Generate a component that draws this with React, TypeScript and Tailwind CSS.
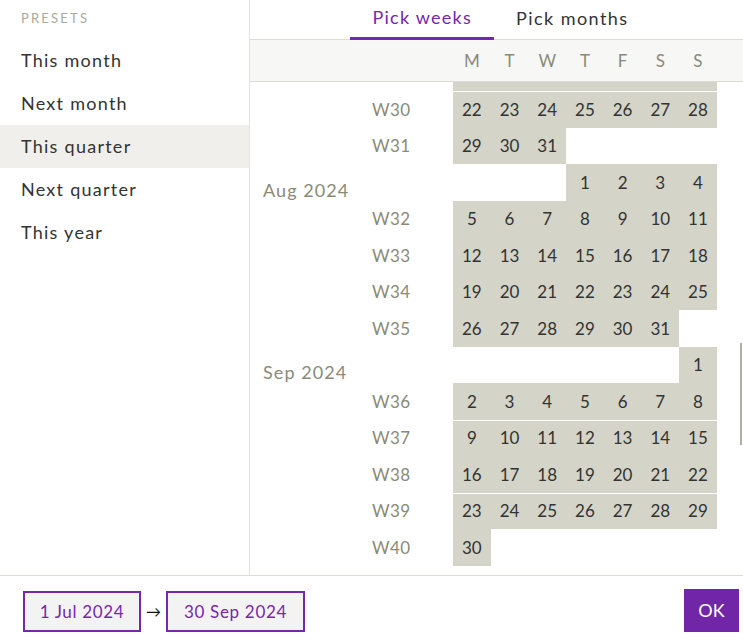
import React from 'react';

type Row = {
  month?: string;
  week?: string;
  days: (number | null)[];
  line?: boolean;
  clipped?: boolean;
};

const presets = ['This month', 'Next month', 'This quarter', 'Next quarter', 'This year'];
const weekdays = ['M', 'T', 'W', 'T', 'F', 'S', 'S'];

// first row sits mostly above the scroll edge, only its background shows
const rows: Row[] = [
  { week: '', days: [15, 16, 17, 18, 19, 20, 21], clipped: true },
  { week: 'W30', days: [22, 23, 24, 25, 26, 27, 28], line: true },
  { week: 'W31', days: [29, 30, 31, null, null, null, null] },
  { month: 'Aug 2024', days: [null, null, null, 1, 2, 3, 4] },
  { week: 'W32', days: [5, 6, 7, 8, 9, 10, 11] },
  { week: 'W33', days: [12, 13, 14, 15, 16, 17, 18] },
  { week: 'W34', days: [19, 20, 21, 22, 23, 24, 25] },
  { week: 'W35', days: [26, 27, 28, 29, 30, 31, null] },
  { month: 'Sep 2024', days: [null, null, null, null, null, null, 1] },
  { week: 'W36', days: [2, 3, 4, 5, 6, 7, 8] },
  { week: 'W37', days: [9, 10, 11, 12, 13, 14, 15], line: true },
  { week: 'W38', days: [16, 17, 18, 19, 20, 21, 22] },
  { week: 'W39', days: [23, 24, 25, 26, 27, 28, 29], line: true },
  { week: 'W40', days: [30, null, null, null, null, null, null] },
];

const CalendarRow = ({ row }: { row: Row }) => {
  return (
    <div className="flex h-[36.5px] shrink-0">
      <div className="w-[122px] pl-[13px] flex items-end">
        {row.month && (
          <span className="leading-[22px] text-[18px] tracking-[0.06em] text-[#8a8a78]">{row.month}</span>
        )}
      </div>
      <div className="w-[81px] flex items-center text-[#8a8a78] tracking-[0.02em]">{row.week}</div>
      {row.days.map((d, i) => (
        <div
          key={i}
          className={
            'w-[37.7px] flex items-center justify-center text-[#333333] ' +
            (d !== null ? 'bg-[#d4d4c8] ' : '') +
            (d !== null && row.line ? 'shadow-[inset_0_1px_0_#ffffff]' : '')
          }
        >
          {row.clipped ? null : d}
        </div>
      ))}
    </div>
  );
};

export default function App() {
  return (
    <div
      className="w-[743px] h-[643px] flex flex-col bg-white text-[17px] overflow-hidden"
      style={{ fontFamily: 'Lato, "Noto Sans", sans-serif' }}
    >
      <div className="flex h-[576px] border-b border-[#dcdcd4]">
        {/* presets */}
        <div className="w-[250px] shrink-0 border-r border-[#e2e2dc]">
          <div className="pt-[9px] pl-[21px] text-[13px] leading-[18px] tracking-[0.17em] text-[#a9a999]">
            PRESETS
          </div>
          <div className="mt-[12px]">
            {presets.map((p) => (
              <div
                key={p}
                className={
                  'h-[43px] flex items-center px-[21px] text-[18px] text-[#333333] tracking-[0.07em] ' +
                  (p === 'This quarter' ? 'bg-[#f0efeb]' : '')
                }
              >
                {p}
              </div>
            ))}
          </div>
        </div>

        {/* calendar */}
        <div className="flex-1 flex flex-col min-w-0">
          <div className="h-[40px] shrink-0 flex justify-center pl-[8px] border-b border-[#dcdcd4]">
            <div className="h-[40px] px-[22px] flex items-center pb-[3px] border-b-[3px] border-[#7527ad] text-[18px] text-[#7527ad] tracking-[0.07em]">
              Pick weeks
            </div>
            <div className="h-[40px] px-[22px] flex items-center pb-[3px] text-[18px] text-[#333333] tracking-[0.08em]">
              Pick months
            </div>
          </div>
          <div className="h-[42px] shrink-0 flex bg-[#f7f7f6] border-b border-[#dcdcd4]">
            <div className="w-[203px]" />
            {weekdays.map((w, i) => (
              <div key={i} className="w-[37.7px] flex items-center justify-center text-[#8a8a78]">
                {w}
              </div>
            ))}
          </div>
          <div className="relative flex-1 overflow-hidden">
            <div className="flex flex-col -mt-[27.5px]">
              {rows.map((r, i) => (
                <CalendarRow key={i} row={r} />
              ))}
            </div>
            <div className="absolute right-[1px] top-[261px] w-[2px] h-[102px] bg-[#b0b0a4]" />
          </div>
        </div>
      </div>

      {/* footer */}
      <div className="flex-1 flex items-center justify-between pt-[4px] pl-[23px] pr-[4px]">
        <div className="flex items-center">
          <div className="h-[41px] w-[118px] flex items-center justify-center border-2 border-[#7527ad] bg-[#f4f3f3] text-[#7527ad] tracking-[0.04em]">
            1 Jul 2024
          </div>
          <span className="w-[25px] text-center text-[15px] text-[#111111]">→</span>
          <div className="h-[41px] w-[139px] flex items-center justify-center border-2 border-[#7527ad] bg-[#f4f3f3] text-[#7527ad] tracking-[0.04em]">
            30 Sep 2024
          </div>
        </div>
        <button className="h-[43px] w-[55px] -mt-[3px] bg-[#7126a8] text-white text-[18px] flex items-center justify-center">
          OK
        </button>
      </div>
    </div>
  );
}
